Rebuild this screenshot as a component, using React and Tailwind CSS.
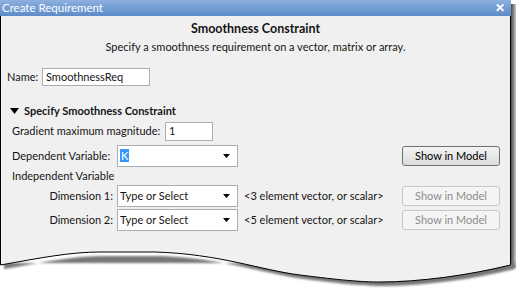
const font = { fontFamily: 'Lato, "Noto Sans", sans-serif' };

function Select({ children, selected }) {
  return (
    <div className="flex h-[22px] w-[121px] shrink-0 items-center border border-[#abadb3] bg-white pl-[2px] pr-[6px]">
      <div className="flex-1 truncate">
        {selected ? (
          <span className="bg-[#3399ff] px-[1px] text-white">{children}</span>
        ) : (
          children
        )}
      </div>
      <svg width="8" height="5" viewBox="0 0 8 5">
        <path d="M0 0 H7 L3.5 4 Z" fill="#000" />
      </svg>
    </div>
  );
}

function ShowButton({ disabled }) {
  return (
    <button
      className={
        disabled
          ? "h-[20px] w-[98px] shrink-0 rounded-[3px] border border-[#c6c6c6] bg-[#f4f4f4] text-[#8c8c8c]"
          : "h-[20px] w-[98px] shrink-0 rounded-[3px] border border-[#707070] bg-gradient-to-b from-[#f4f4f4] to-[#dcdcdc] text-black"
      }
    >
      Show in Model
    </button>
  );
}

export default function App() {
  return (
    <div className="h-[297px] w-[525px] overflow-hidden whitespace-nowrap bg-white text-[11px] text-[#151515]" style={font}>
      <div className="flex h-[250px]">
        <div className="flex w-[511px] flex-col">
          <div className="flex h-[16px] items-center justify-between bg-gradient-to-b from-[#8db0de] to-[#5b8bc8] pl-[2px] pr-[6px] text-[11.5px] text-white">
            <span className="leading-none">Create Requirement</span>
            <span className="text-[12px] font-bold leading-none">✕</span>
          </div>
          <div className="flex flex-1 flex-col border-l border-r border-black bg-[#f0f0f0]">
            <div className="mt-[5px] flex h-[16px] items-center justify-center text-[12.5px] font-bold">
              Smoothness Constraint
            </div>
            <div className="mt-[2px] flex h-[16px] items-center justify-center">
              Specify a smoothness requirement on a vector, matrix or array.
            </div>
            <div className="mt-[13px] flex h-[18px] items-center pl-[6px]">
              <span className="w-[35px]">Name:</span>
              <div className="flex h-[18px] w-[108px] items-center border border-[#abadb3] bg-white pl-[3px]">
                SmoothnessReq
              </div>
            </div>
            <div className="mt-[17px] flex h-[16px] items-center pl-[9px] font-bold">
              <svg width="10" height="7" viewBox="0 0 10 7" className="mr-[4px]">
                <path d="M0 0 H9 L4.5 6 Z" fill="#000" />
              </svg>
              Specify Smoothness Constraint
            </div>
            <div className="mt-[3px] flex h-[19px] items-center pl-[11px]">
              <span className="w-[153px]">Gradient maximum magnitude:</span>
              <div className="flex h-[19px] w-[48px] items-center border border-[#abadb3] bg-white pl-[3px]">1</div>
            </div>
            <div className="mt-[4px] flex h-[22px] items-center pl-[11px]">
              <span className="w-[105px]">Dependent Variable:</span>
              <Select selected>K</Select>
              <div className="flex-1" />
              <ShowButton />
              <div className="w-[10px]" />
            </div>
            <div className="mt-[2px] flex h-[14px] items-center pl-[11px]">Independent Variable</div>
            <div className="mt-[2px] flex h-[22px] items-center">
              <span className="w-[116px] pr-[4px] text-right">Dimension 1:</span>
              <Select>Type or Select</Select>
              <span className="ml-[6px]">&lt;3 element vector, or scalar&gt;</span>
              <div className="flex-1" />
              <ShowButton disabled />
              <div className="w-[10px]" />
            </div>
            <div className="mt-[2px] flex h-[22px] items-center">
              <span className="w-[116px] pr-[4px] text-right">Dimension 2:</span>
              <Select>Type or Select</Select>
              <span className="ml-[6px]">&lt;5 element vector, or scalar&gt;</span>
              <div className="flex-1" />
              <ShowButton disabled />
              <div className="w-[10px]" />
            </div>
          </div>
        </div>
        <div className="mt-[4px] w-[5px] bg-gradient-to-r from-[#4a4a4a] to-[#c8c8c8]" />
      </div>
      <svg width="525" height="47" viewBox="0 0 525 47" className="block">
        <defs>
          <filter id="blur" x="-10%" y="-50%" width="120%" height="200%">
            <feGaussianBlur stdDeviation="1.2" />
          </filter>
          <linearGradient id="side" x1="0" x2="1" y1="0" y2="0">
            <stop offset="0" stopColor="#4a4a4a" />
            <stop offset="1" stopColor="#c8c8c8" />
          </linearGradient>
        </defs>
        <rect x="511" y="0" width="5" height="18" fill="url(#side)" />
        <path
          d="M4,19 C44,12 74,6 104,6 L159,6 C224,8 264,24 304,29 C344,34 364,36 384,36 C424,36 474,29 515,19 L515,13 L4,13 Z"
          fill="#777"
          filter="url(#blur)"
        />
        <path
          d="M0.5,0 L0.5,15 C40,8 70,2 100,2 L155,2 C220,4 260,20 300,25 C340,30 360,32 380,32 C420,32 470,25 510.5,15 L510.5,0 Z"
          fill="#f0f0f0"
        />
        <path
          d="M0.5,0 L0.5,15 C40,8 70,2 100,2 L155,2 C220,4 260,20 300,25 C340,30 360,32 380,32 C420,32 470,25 510.5,15 L510.5,0"
          fill="none"
          stroke="#000"
          strokeWidth="1"
        />
      </svg>
    </div>
  );
}
